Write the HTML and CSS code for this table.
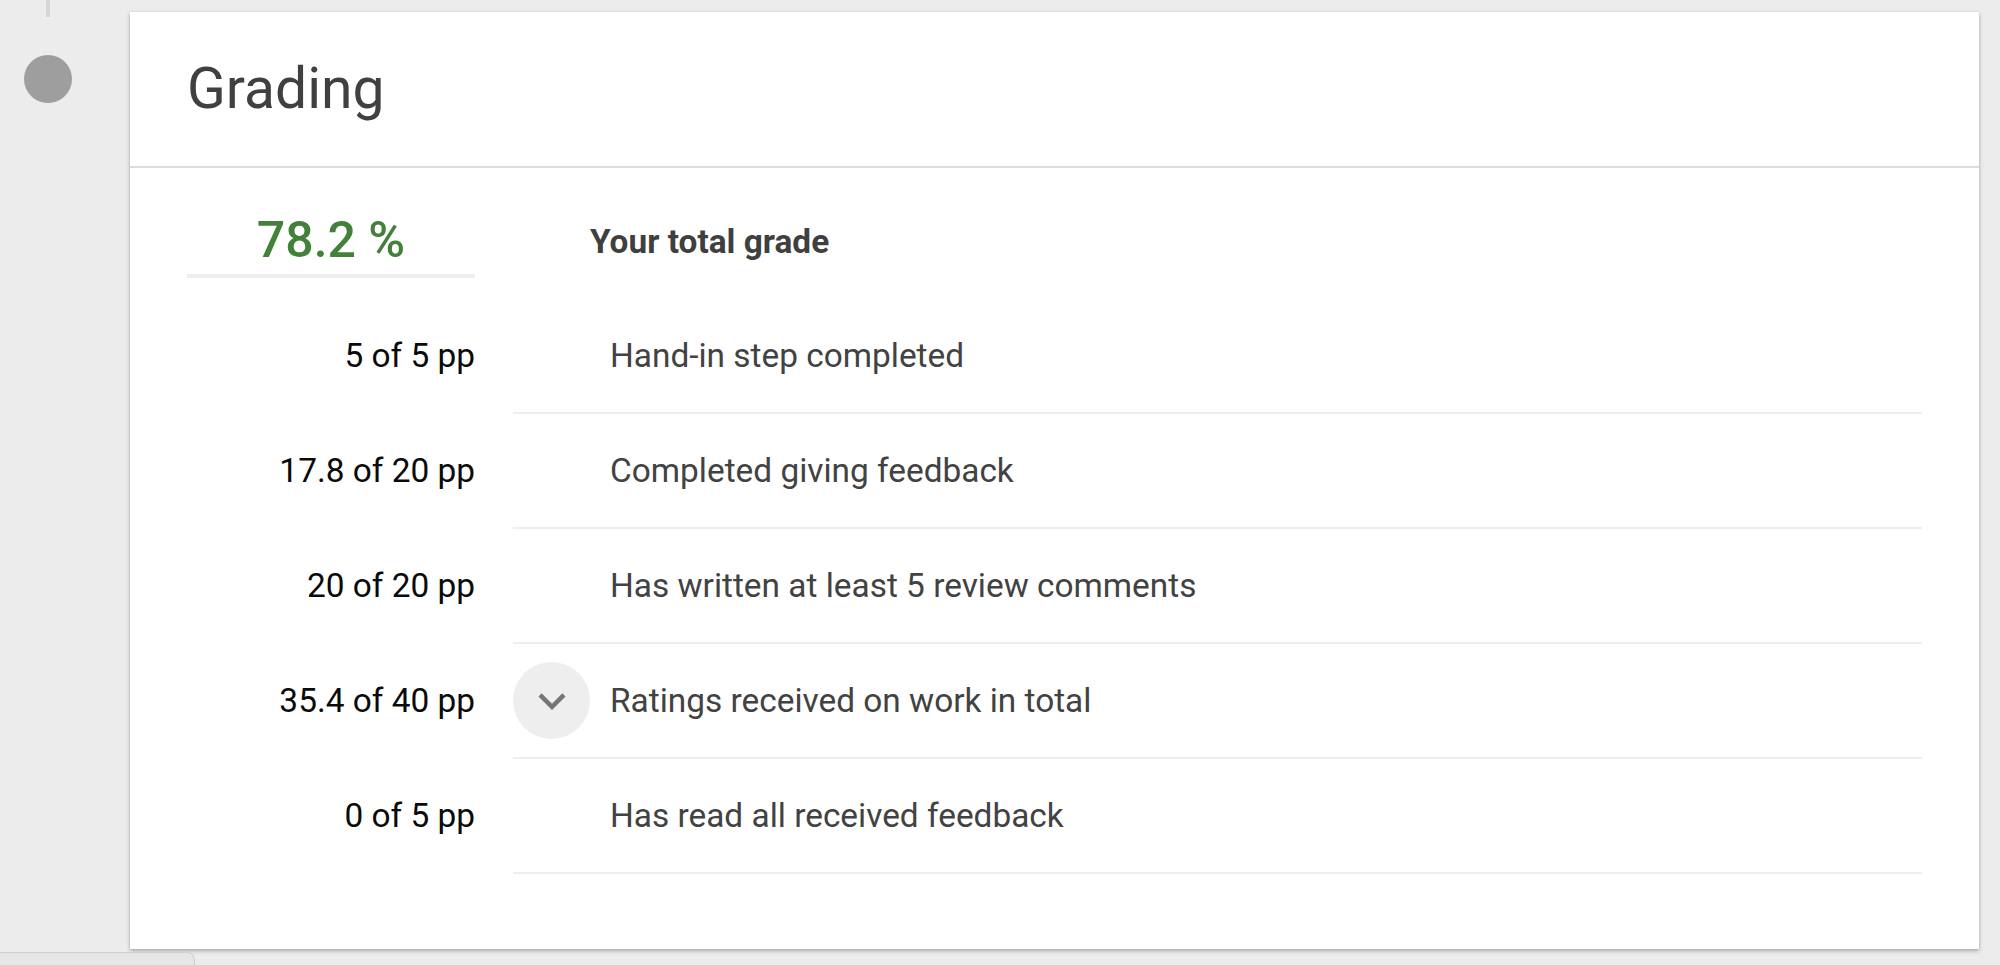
FILE: index.html
```html
<!DOCTYPE html>
<html lang="en">
<head>
<meta charset="utf-8">
<title>Grading</title>
<link rel="stylesheet" href="styles.css">
</head>
<body>
<div class="page">
  <div class="rail">
    <div class="rail-line"></div>
    <div class="rail-dot"></div>
  </div>
  <section class="card">
    <header class="card-header">
      <h1 class="card-title">Grading</h1>
    </header>
    <div class="card-body">
      <div class="total-row">
        <div class="total-value">78.2 %</div>
        <div class="total-label">Your total grade</div>
      </div>
      <div class="grade-row">
        <div class="points">5 of 5 pp</div>
        <div class="criterion"><span class="criterion-text">Hand-in step completed</span></div>
      </div>
      <div class="grade-row">
        <div class="points">17.8 of 20 pp</div>
        <div class="criterion"><span class="criterion-text">Completed giving feedback</span></div>
      </div>
      <div class="grade-row">
        <div class="points">20 of 20 pp</div>
        <div class="criterion"><span class="criterion-text">Has written at least 5 review comments</span></div>
      </div>
      <div class="grade-row">
        <div class="points">35.4 of 40 pp</div>
        <div class="criterion has-toggle">
          <button class="expand-btn" type="button" aria-label="Expand">
            <svg viewBox="0 0 24 24" width="54" height="54"><path d="M16.59 8.59L12 13.17 7.41 8.59 6 10l6 6 6-6z" fill="#757575"/></svg>
          </button>
          <span class="criterion-text">Ratings received on work in total</span>
        </div>
      </div>
      <div class="grade-row">
        <div class="points">0 of 5 pp</div>
        <div class="criterion"><span class="criterion-text">Has read all received feedback</span></div>
      </div>
    </div>
  </section>
</div>
<div class="bottom-tab"></div>
</body>
</html>
```

FILE: styles.css
```css
html, body {
  margin: 0;
  padding: 0;
  height: 100%;
  overflow: hidden;
}
body {
  background: #ececec;
  font-family: Roboto, "Liberation Sans", Arial, sans-serif;
  color: #424242;
}
.page {
  display: flex;
  align-items: flex-start;
}
.rail {
  width: 96px;
  flex: none;
  display: flex;
  flex-direction: column;
  align-items: center;
}
.rail-line {
  width: 4px;
  height: 17px;
  background: #d6d6d6;
}
.rail-dot {
  width: 48px;
  height: 48px;
  border-radius: 50%;
  background: #9e9e9e;
  margin-top: 38px;
}
.card {
  margin-top: 12px;
  margin-left: 34px;
  width: 1849px;
  background: #fff;
  box-shadow: 0 2px 4px rgba(0,0,0,0.28), 0 0 2px rgba(0,0,0,0.08);
}
.card-header {
  height: 154px;
  border-bottom: 2px solid #dcdcdc;
  display: flex;
  align-items: center;
  padding: 0 57px;
}
.card-title {
  margin: 0;
  font-size: 57px;
  font-weight: 400;
  line-height: 1;
  color: #404040;
  position: relative;
  top: -1px;
}
.card-body {
  padding: 0 57px 75px 57px;
}
.total-row {
  display: grid;
  grid-template-columns: 288px 1fr;
  column-gap: 38px;
  margin-bottom: 21px;
}
.total-value {
  padding: 44px 0 6px;
  line-height: 56px;
  font-size: 50px;
  font-weight: 500;
  color: #43803a;
  text-align: center;
  border-bottom: 4px solid #eeeeee;
}
.total-label {
  padding: 46px 0 0 77px;
  line-height: 56px;
  font-size: 33.4px;
  font-weight: 700;
  color: #3f3f3f;
}
.grade-row {
  display: grid;
  grid-template-columns: 288px 1fr;
  column-gap: 38px;
  height: 115px;
}
.points {
  display: flex;
  align-items: center;
  justify-content: flex-end;
  font-size: 33.4px;
  color: #0a0a0a;
  padding-bottom: 2px;
}
.criterion {
  display: flex;
  align-items: center;
  padding-left: 97px;
  border-bottom: 2px solid #eeeeee;
  font-size: 33.4px;
  color: #424242;
}
.criterion.has-toggle {
  padding-left: 0;
}
.expand-btn {
  width: 77px;
  height: 77px;
  border-radius: 50%;
  border: none;
  background: #eeeeee;
  padding: 0;
  margin-right: 20px;
  display: flex;
  align-items: center;
  justify-content: center;
  cursor: pointer;
}
.expand-btn svg {
  display: block;
}
.bottom-tab {
  position: fixed;
  left: 0;
  bottom: 0;
  width: 194px;
  height: 12px;
  background: #e6e6e6;
  border-top: 1px solid #cfcfcf;
  border-right: 1px solid #cfcfcf;
  border-top-right-radius: 8px;
}
```
